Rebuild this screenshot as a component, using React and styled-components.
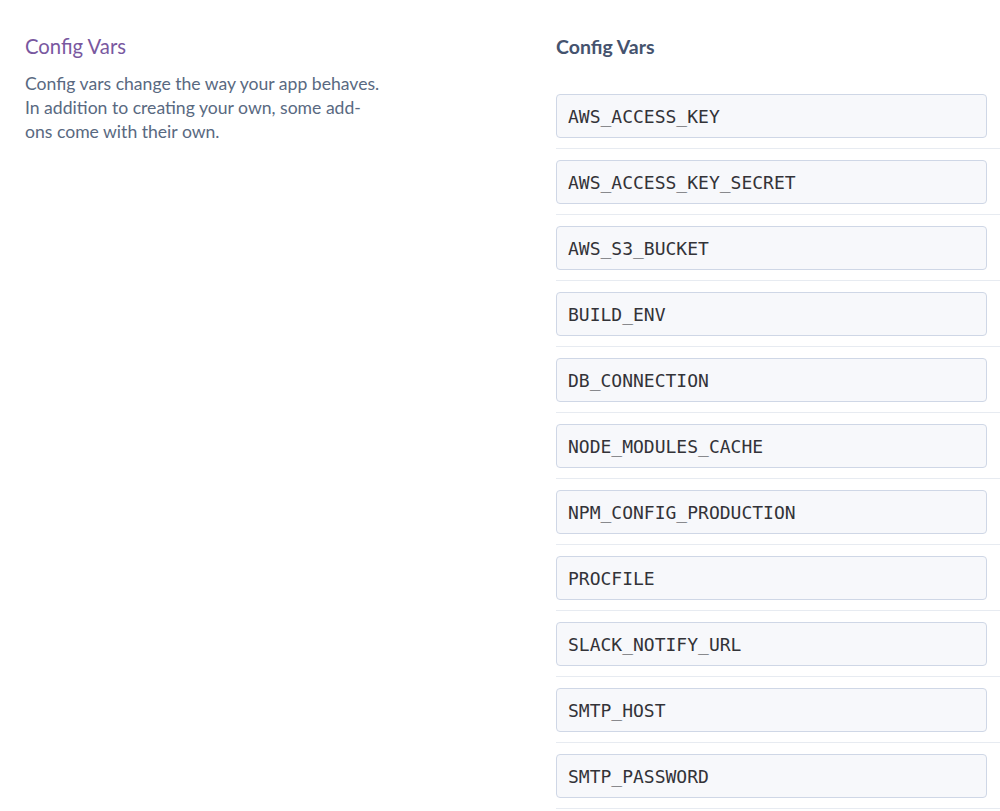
import React from "react";
import styled, { createGlobalStyle } from "styled-components";

const Global = createGlobalStyle`
  html, body { margin: 0; padding: 0; background: #ffffff; }
  body { font-family: Lato, "Open Sans", sans-serif; }
`;

const Page = styled.div`
  display: flex;
  width: 1000px;
  overflow: hidden;
`;

const Intro = styled.section`
  box-sizing: border-box;
  width: 556px;
  padding: 33px 0 0 25px;
  flex-shrink: 0;
`;

const IntroTitle = styled.h2`
  margin: 0;
  font-family: Lato, "Open Sans", sans-serif;
  font-weight: 400;
  font-size: 20.3px;
  line-height: 26px;
  color: #79589f;
`;

const IntroText = styled.p`
  margin: 13px 0 0;
  width: 358px;
  font-size: 17.6px;
  line-height: 24px;
  color: #596981;
`;

const Panel = styled.section`
  flex: 1;
  padding-top: 35px;
`;

const PanelTitle = styled.h3`
  margin: 0 0 35px;
  font-family: Lato, "Open Sans", sans-serif;
  font-weight: 700;
  font-size: 19.5px;
  line-height: 24px;
  color: #45536e;
`;

const List = styled.div`
  display: flex;
  flex-direction: column;
`;

const Row = styled.div`
  padding-bottom: 10px;
  margin-bottom: 11px;
  border-bottom: 1px solid #e7ebf1;
  margin-right: -20px;
  padding-right: 33px;
`;

const KeyInput = styled.input`
  display: block;
  box-sizing: border-box;
  width: 431px;
  height: 44px;
  padding: 0 11px;
  border: 1px solid #cfd7e6;
  border-radius: 4px;
  background: #f7f8fb;
  font-family: "DejaVu Sans Mono", monospace;
  font-size: 18px;
  color: #333338;
  outline: none;
`;

const keys = [
  "AWS_ACCESS_KEY",
  "AWS_ACCESS_KEY_SECRET",
  "AWS_S3_BUCKET",
  "BUILD_ENV",
  "DB_CONNECTION",
  "NODE_MODULES_CACHE",
  "NPM_CONFIG_PRODUCTION",
  "PROCFILE",
  "SLACK_NOTIFY_URL",
  "SMTP_HOST",
  "SMTP_PASSWORD",
];

export default function App() {
  return (
    <>
      <Global />
      <Page>
        <Intro>
          <IntroTitle>Config Vars</IntroTitle>
          <IntroText>
            Config vars change the way your app behaves. In addition to creating
            your own, some add-ons come with their own.
          </IntroText>
        </Intro>
        <Panel>
          <PanelTitle>Config Vars</PanelTitle>
          <List>
            {keys.map((k) => (
              <Row key={k}>
                <KeyInput readOnly value={k} />
              </Row>
            ))}
          </List>
        </Panel>
      </Page>
    </>
  );
}
